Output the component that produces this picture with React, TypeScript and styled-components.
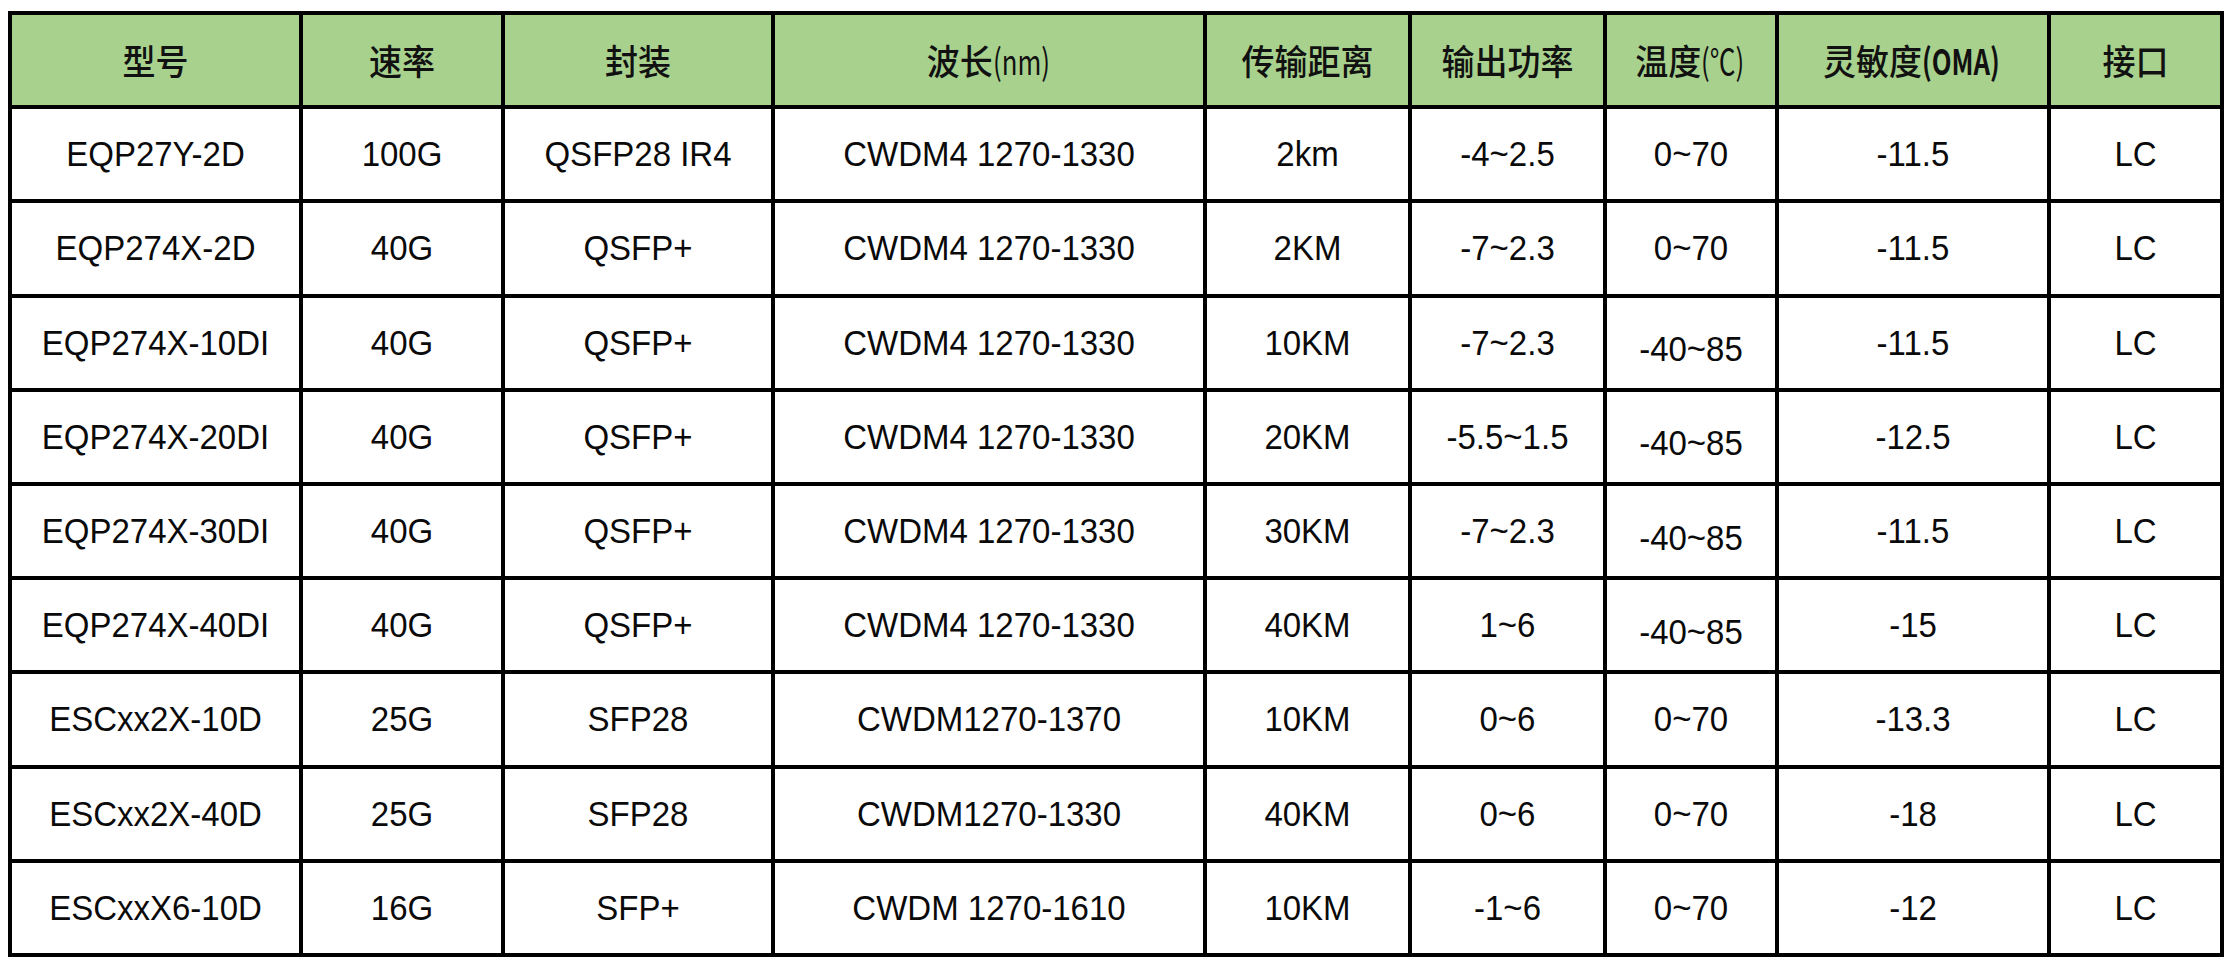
import React from "react";
import styled, { createGlobalStyle } from "styled-components";

const Global = createGlobalStyle`
  html, body { margin: 0; padding: 0; background: #ffffff; }
  body { width: 2234px; height: 967px; overflow: hidden; }
`;

const Page = styled.div`
  padding: 11px 0 0 8px;
`;

const COLS = [291, 202, 270, 432, 205, 195, 172, 272, 169];

const Grid = styled.div`
  display: grid;
  width: max-content;
  grid-template-columns: ${COLS.map((c) => c + "px").join(" ")};
  grid-template-rows: repeat(9, 94.2px) 90.2px;
  border: 4px solid #000;
  background: #fff;
`;

const Cell = styled.div<{ $lastCol: boolean; $lastRow: boolean; $drop?: boolean }>`
  box-sizing: border-box;
  display: flex;
  align-items: center;
  justify-content: center;
  border-right: ${(p) => (p.$lastCol ? "none" : "4px solid #000")};
  border-bottom: ${(p) => (p.$lastRow ? "none" : "4px solid #000")};
  padding-top: ${(p) => (p.$drop ? "13px" : "0")};
  white-space: nowrap;
`;

const HeadCell = styled(Cell)`
  background: #a9d18e;
  font-family: "Noto Sans CJK SC", "Noto Sans", sans-serif;
  font-weight: 500;
  font-size: 33px;
  color: #111;
`;

const DataCell = styled(Cell)`
  font-family: "Liberation Sans", Arial, sans-serif;
  font-size: 33px;
  color: #0a0a0a;
`;

const Text = styled.span`
  display: inline-block;
  transform: scaleY(1.06);
`;

const HeadText = styled.span`
  display: inline-flex;
  align-items: center;
  transform: scaleY(1.08);
`;

const Narrow = styled.span<{ $bold?: boolean; $squeeze: number }>`
  display: inline-block;
  font-weight: ${(p) => (p.$bold ? 700 : 400)};
  transform-origin: left center;
  transform: scaleX(0.78);
  margin-right: ${(p) => -p.$squeeze}em;
`;

const headers: React.ReactNode[] = [
  "型号",
  "速率",
  "封装",
  <>波长<Narrow $squeeze={0.44}>(nm)</Narrow></>,
  "传输距离",
  "输出功率",
  <>温度<Narrow $squeeze={0.3}>(℃)</Narrow></>,
  <>灵敏度<Narrow $bold $squeeze={0.56}>(OMA)</Narrow></>,
  "接口",
];

const rows: string[][] = [
  ["EQP27Y-2D", "100G", "QSFP28 IR4", "CWDM4 1270-1330", "2km", "-4~2.5", "0~70", "-11.5", "LC"],
  ["EQP274X-2D", "40G", "QSFP+", "CWDM4 1270-1330", "2KM", "-7~2.3", "0~70", "-11.5", "LC"],
  ["EQP274X-10DI", "40G", "QSFP+", "CWDM4 1270-1330", "10KM", "-7~2.3", "-40~85", "-11.5", "LC"],
  ["EQP274X-20DI", "40G", "QSFP+", "CWDM4 1270-1330", "20KM", "-5.5~1.5", "-40~85", "-12.5", "LC"],
  ["EQP274X-30DI", "40G", "QSFP+", "CWDM4 1270-1330", "30KM", "-7~2.3", "-40~85", "-11.5", "LC"],
  ["EQP274X-40DI", "40G", "QSFP+", "CWDM4 1270-1330", "40KM", "1~6", "-40~85", "-15", "LC"],
  ["ESCxx2X-10D", "25G", "SFP28", "CWDM1270-1370", "10KM", "0~6", "0~70", "-13.3", "LC"],
  ["ESCxx2X-40D", "25G", "SFP28", "CWDM1270-1330", "40KM", "0~6", "0~70", "-18", "LC"],
  ["ESCxxX6-10D", "16G", "SFP+", "CWDM 1270-1610", "10KM", "-1~6", "0~70", "-12", "LC"],
];

export default function App() {
  const lastCol = headers.length - 1;
  return (
    <>
      <Global />
      <Page>
        <Grid>
          {headers.map((h, i) => (
            <HeadCell key={"h" + i} $lastCol={i === lastCol} $lastRow={false}>
              <HeadText>{h}</HeadText>
            </HeadCell>
          ))}
          {rows.map((r, ri) =>
            r.map((v, ci) => (
              <DataCell
                key={ri + "-" + ci}
                $lastCol={ci === lastCol}
                $lastRow={ri === rows.length - 1}
                $drop={v === "-40~85"}
              >
                <Text>{v}</Text>
              </DataCell>
            ))
          )}
        </Grid>
      </Page>
    </>
  );
}
